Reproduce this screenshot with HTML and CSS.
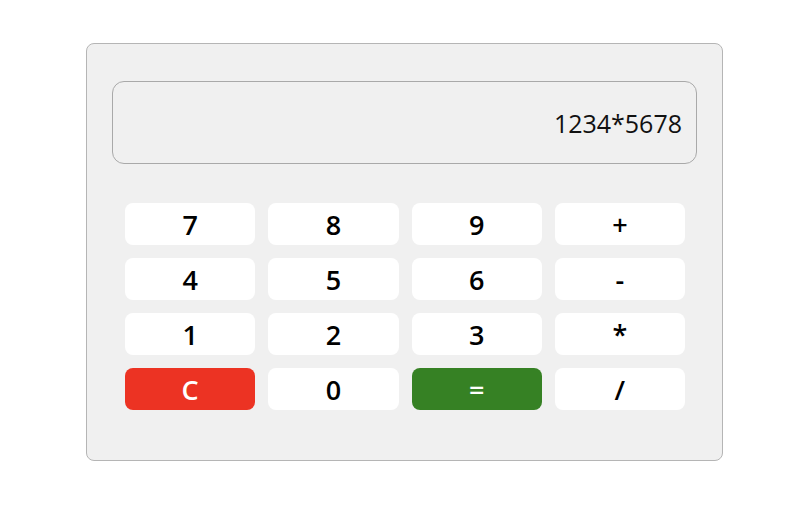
FILE: index.html
```html
<!DOCTYPE html>
<html>
<head>
<meta charset="utf-8">
<link rel="stylesheet" href="styles.css">
</head>
<body>
<div class="calc">
  <div class="display">1234*5678</div>
  <div class="keys">
    <div class="key">7</div>
    <div class="key">8</div>
    <div class="key">9</div>
    <div class="key">+</div>
    <div class="key">4</div>
    <div class="key">5</div>
    <div class="key">6</div>
    <div class="key">-</div>
    <div class="key">1</div>
    <div class="key">2</div>
    <div class="key">3</div>
    <div class="key">*</div>
    <div class="key clear">C</div>
    <div class="key">0</div>
    <div class="key equals">=</div>
    <div class="key">/</div>
  </div>
</div>
</body>
</html>
```
FILE: styles.css
```css
html, body {
  margin: 0;
  padding: 0;
  background: #ffffff;
  font-family: "Open Sans", "Liberation Sans", sans-serif;
}
body {
  padding: 43px 0 0 86px;
}
.calc {
  box-sizing: border-box;
  width: 637px;
  height: 418px;
  background: #f0f0f0;
  border: 1px solid #b5b5b5;
  border-radius: 8px;
  padding: 37px 25px 0 25px;
}
.display {
  box-sizing: border-box;
  height: 83px;
  border: 1px solid #a9a9a9;
  border-radius: 12px;
  display: flex;
  align-items: center;
  justify-content: flex-end;
  padding: 0 14px 0 14px;
  font-size: 25px;
  color: #111;
  background: #f0f0f0;
}
.keys {
  margin: 39px 12px 0 13px;
  display: grid;
  grid-template-columns: repeat(4, 1fr);
  column-gap: 13px;
  row-gap: 13px;
}
.key {
  height: 42px;
  background: #ffffff;
  border-radius: 8px;
  display: flex;
  align-items: center;
  justify-content: center;
  font-size: 27px;
  font-weight: 600;
  color: #000;
}
.clear {
  background: #ec3323;
  color: #fff;
}
.equals {
  background: #368124;
  color: #fff;
}
```
